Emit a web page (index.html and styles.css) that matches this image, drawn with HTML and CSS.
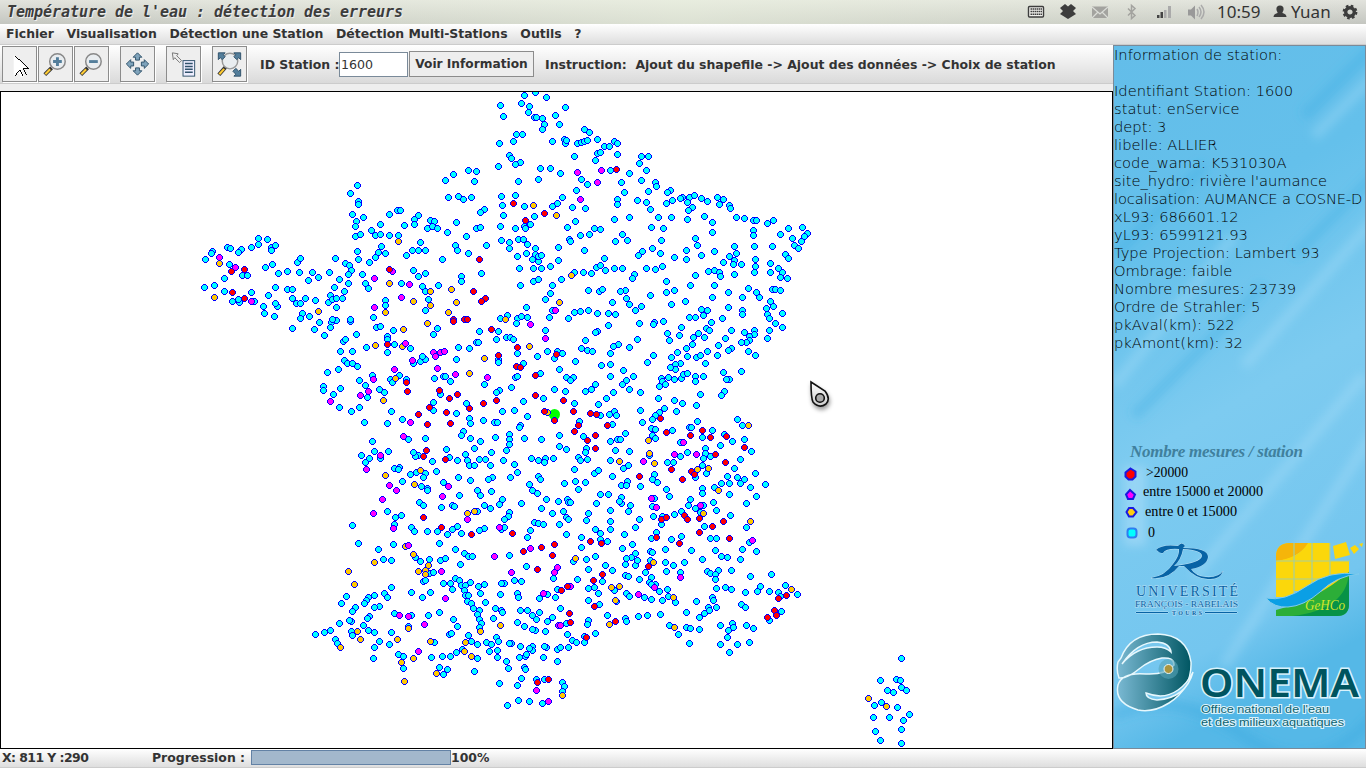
FILE: index.html
```html
<!DOCTYPE html>
<html lang="fr">
<head>
<meta charset="utf-8">
<title>Température de l'eau : détection des erreurs</title>
<link rel="stylesheet" href="styles.css">
</head>
<body>
<header class="topbar">
  <h1 class="title">Température de l'eau : détection des erreurs</h1>
  <div class="tray">
    <svg width="300" height="24" viewBox="1020 0 300 24">
      <rect x="1028.500" y="6.500" width="15" height="10.500" rx="1" fill="#f0f0ec" stroke="#3d3d3d" stroke-width="1.400"/>
      <path d="M1030.500 9h11.500M1030.500 11.500h11.500M1030.500 14.200h11.500" stroke="#3d3d3d" stroke-width="1.600" stroke-dasharray="1.600 .5"/>
      <path d="M1060 8l5-4 3 2.500 3-2.500 5 4-3 3 3 3-8 5-8-5 3-3z" fill="#3d3d3d"/>
      <rect x="1092" y="6.500" width="16" height="11.500" fill="#a3a39f"/>
      <path d="M1092 7l8 7 8-7M1092 18l6-6M1108 18l-6-6" fill="none" stroke="#dbddd8" stroke-width="1.200"/>
      <path d="M1128 8.500l7 7-3.500 3v-13l3.500 3-7 7" fill="none" stroke="#a3a39f" stroke-width="1.500"/>
      <path d="M1157 15h2.500v3h-2.500zM1160.500 12h2.500v6h-2.500z" fill="#444"/><path d="M1164 10h2.500v8h-2.500zM1168 6h3v12h-3z" fill="#aaa"/>
      <path d="M1188 9.500h3l4-4v14l-4-4h-3z" fill="#999"/>
      <path d="M1197 9q2 3 0 7M1199 7q4 5 0 10M1201 5q6 7 0 14" fill="none" stroke="#aaa" stroke-width="1.500"/>
      <circle cx="1280" cy="9" r="3.600" fill="#3d3d3d"/><path d="M1273.500 17q0-3 4-4v-2h5v2q4 1 4 4z" fill="#3d3d3d"/>
    </svg>
    <span class="clock">10:59</span><span class="user">Yuan</span>
    <svg class="gear" width="16" height="16" viewBox="-8 -8 16 16"><circle r="4.300" fill="none" stroke="#3d3d3d" stroke-width="3.400"/><circle r="6.300" fill="none" stroke="#3d3d3d" stroke-width="2.200" stroke-dasharray="2.600 2.350"/></svg>
  </div>
</header>
<nav class="menu"><span>Fichier</span><span>Visualisation</span><span>Détection une Station</span><span>Détection Multi-Stations</span><span>Outils</span><span>?</span></nav>
<main class="main">
  <section class="work">
    <div class="tools">
      <button class="tool"><svg viewBox="0 0 34 34"><path d="M11 8v21l4.500-4 3 6 3-1.500-2.500-7h7z" fill="#fff"/><path d="M12.500 8.500l14 13.500h-6M21 22l3 6M12.500 29l5-6 3 6" fill="none" stroke="#000" shape-rendering="crispEdges"/></svg></button>
      <button class="tool"><svg viewBox="0 0 34 34"><path d="M6 28l7-7" stroke="#333" stroke-width="4"/><path d="M6.500 27.500l5-5" stroke="#fc3" stroke-width="2.200"/><circle cx="19" cy="14.500" r="8" fill="#e9edf0" stroke="#888" stroke-width="1.500"/><path d="M19 10v9M14.500 14.500h9" stroke="#537e9b" stroke-width="3"/></svg></button>
      <button class="tool"><svg viewBox="0 0 34 34"><path d="M6 28l7-7" stroke="#333" stroke-width="4"/><path d="M6.500 27.500l5-5" stroke="#fc3" stroke-width="2.200"/><circle cx="19" cy="14.500" r="8" fill="#e9edf0" stroke="#888" stroke-width="1.500"/><path d="M14.500 14.500h9" stroke="#537e9b" stroke-width="3"/></svg></button>
      <button class="tool gap"><svg viewBox="-17 -17 34 34"><g fill="#7fa3bb" stroke="#31536b"><path d="M0-11.500l4.500 4.500h-2.500v3h-4v-3h-2.500z"/><path d="M0-11.500l4.500 4.500h-2.500v3h-4v-3h-2.500z" transform="rotate(90)"/><path d="M0-11.500l4.500 4.500h-2.500v3h-4v-3h-2.500z" transform="rotate(180)"/><path d="M0-11.500l4.500 4.500h-2.500v3h-4v-3h-2.500z" transform="rotate(270)"/></g></svg></button>
      <button class="tool gap"><svg viewBox="0 0 34 34"><path d="M5.500 5.500l6 1-1.500 2 5 5-2 2-5-5-1.500 2z" fill="#eee" stroke="#777"/><rect x="16.500" y="13.500" width="12" height="16" fill="#eef" stroke="#31536b"/><path d="M18.500 16.500h8M18.500 19.500h8M18.500 22.500h8M18.500 25.500h8" stroke="#31536b" stroke-width="1.500"/></svg></button>
      <button class="tool gap"><svg viewBox="0 0 34 34"><path d="M6 28l7-8" stroke="#333" stroke-width="4"/><path d="M6.500 27.500l5-5.500" stroke="#fc3" stroke-width="2.200"/><circle cx="17.500" cy="14" r="8" fill="#e9edf0" stroke="#999" stroke-width="1.500"/><g fill="#537e9b" stroke="#31536b"><path d="M5.500 5.500h7l-2 2 2 2-3 3-2-2-2 2z"/><path d="M28.500 5.500v7l-2-2-2 2-3-3 2-2-2-2z"/><path d="M28.500 29.500v-7l-2 2-3-3-3 3 3 3-2 2z"/></g></svg></button>
      <span class="label">ID Station :</span><input class="field" value="1600"><button class="info">Voir Information</button>
      <span class="instr">Instruction:&nbsp; Ajout du shapefile -&gt; Ajout des données -&gt; Choix de station</span>
    </div>
    <div class="map">
      <svg id="stations" width="1111" height="656" viewBox="1 92 1111 656"></svg>
    </div>
  </section>
  <aside class="panel">
    <svg class="backdrop" width="251" height="702" viewBox="0 0 251 702" preserveAspectRatio="none">
      <defs><linearGradient id="sky" x1="0" y1="0" x2=".2" y2="1"><stop offset="0" stop-color="#63bde9"/><stop offset=".3" stop-color="#64c0eb"/><stop offset=".58" stop-color="#7dcbf0"/><stop offset=".9" stop-color="#74c6ef"/><stop offset="1" stop-color="#55b8e7"/></linearGradient><filter id="soft" x="-50%" y="-50%" width="200%" height="200%"><feGaussianBlur stdDeviation="5"/></filter>
      <linearGradient id="fish"><stop offset="0" stop-color="#7ab9d3"/><stop offset="1" stop-color="#005662"/></linearGradient></defs>
      <rect width="251" height="702" fill="url(#sky)"/>
      <g filter="url(#soft)" stroke-width="11" fill="none"><path d="M190 70L270-10M180 210L290 100M0 210L90 120M20 370L150 240" stroke="#40ace1" opacity=".35"/><path d="M200 90L270 20M130 320L290 140M0 340L120 190M110 620L270 370M80 530L250 330" stroke="#b9e5fa" opacity=".28"/><path d="M0 670Q60 640 130 690T260 670" stroke="#38a8df" opacity=".4"/></g>
    </svg>
    <pre class="data">Information de station:

Identifiant Station: 1600
statut: enService
dept: 3
libelle: ALLIER
code_wama: K531030A
site_hydro: rivière l'aumance
<span class="tight">localisation: AUMANCE a COSNE-D</span>
xL93: 686601.12
yL93: 6599121.93
Type Projection: Lambert 93
Ombrage: faible
Nombre mesures: 23739
Ordre de Strahler: 5
pkAval(km): 522
pkAmont(km): 32</pre>
    <svg class="legend" width="251" height="310" viewBox="1114 437 251 310">
      <text class="ltitle" x="1130" y="456" textLength="173">Nombre mesures / station</text>
      <g filter="url(#soft)" fill="#a8dcf8" opacity=".6"><rect x="1124" y="465" width="22" height="80"/></g>
      <g stroke="#1a1ae0" stroke-width="2"><path d="M1130.500 467.500l5 3v5l-3 3h-4l-3-3v-4z" fill="#f00"/><path d="M1130 489l5 4.500-2 4.500h-5l-2-4.500z" fill="#f0f"/><path d="M1129 507h4l3.500 4-3.500 4.500h-4l-2.500-4.500z" fill="#fc1"/><rect x="1127.500" y="527.500" width="9" height="9" rx="3" fill="#0ff" stroke="#2f7df0"/></g>
      <g class="ltext"><text x="1146" y="476" textLength="42" lengthAdjust="spacingAndGlyphs">&gt;20000</text><text x="1143" y="494.500" textLength="120" lengthAdjust="spacingAndGlyphs">entre 15000 et 20000</text><text x="1145" y="514.500" textLength="92" lengthAdjust="spacingAndGlyphs">entre 0 et 15000</text><text x="1148" y="535.500">0</text></g>
      <g fill="#0863a5" class="halo"><path d="M1156 549Q1162 543 1178 545q4-5 7 0l-2 2q25 0 25 9-1 9-17 12 4 7 15 8 12 1 17-6-3 9-15 8-12 0-24-13h-5q-11 14-28 12 14-2 22-14 7-9 6-15-13-1-16 4-4 0-5-2zm27-1q-2 11-9 17 27-3 28-10 0-6-19-7z"/>
      <text class="uni" x="1136" y="595" textLength="102">UNIVERSITÉ</text><text class="uni2" x="1135" y="605.500" textLength="103" lengthAdjust="spacingAndGlyphs">FRANÇOIS - RABELAIS</text><text class="uni3" x="1172" y="613.500" textLength="30">TOURS</text><path d="M1136 611h32v1h-32zM1205 611h32v1h-32z"/></g>
      <g><path d="M1276 556q0-14 14-14h4v54h-18z" fill="#fbd70b"/><path d="M1276 560v-4q0-14 14-14h19q-10 15-33 18z" fill="#f5b50a"/><path d="M1276 560q22-2 32-18h22v18h19v30h-73z" fill="#fbd70b"/><path d="M1333 545l13-4 4 13-15 4z" fill="#fbd70b"/><path d="M1350 547l5-3 4 4-5 5zM1359 543l4-1-1 4z" fill="#fbd70b"/><path d="M1294 542v50M1312 542v45M1330 542v42M1276 560h74M1276 578h74" stroke="#a5cf9f" stroke-width="1.200"/><path d="M1276 615v-6q40-10 73-38v32q0 12-12 12z" fill="#2cae38"/><path d="M1349 572v31q0 12-12 12h-45q54-6 57-43z" fill="#079247"/><path d="M1266 597q18 4 41-12 22-16 52-12-23 2-39 18-16 14-32 15-14 1-22-9z" fill="#0b9fe5" stroke="#80cbed"/><text class="gehco" x="1305" y="608.500" textLength="40" lengthAdjust="spacingAndGlyphs">GeHCo</text></g>
      <g stroke="#e7f8fd" stroke-width="1.500" fill="url(#fish)"><path d="M1121 656Q1130 632 1158 632q29 1 33 28 1 26-22 41-16 10-31 7-24-7-20-25 4-13 28-11 20 1 28-9 0-8-12-7-12 2-23 11-12 10-20 9-3-8-1-16z" transform="translate(0 1)"/><path d="M1122 663q14-17 35-17 9 0 14 5-1-9-14-10-20 0-35 22z" fill="#79c8ee"/><path d="M1193 671q-7 26-36 28-11-1-11-7 18 7 32-3 9-6 15-18z" fill="#79c8ee"/></g><circle cx="1168.500" cy="668" r="10" fill="#55a3b8" opacity=".6"/><circle cx="1168.500" cy="668" r="4.500" fill="#ab953e" stroke="#e7f8fd"/>
      <text class="onema" x="1200" y="696" textLength="159" lengthAdjust="spacingAndGlyphs">ONEMA</text><g class="office"><text x="1201" y="712" textLength="128" lengthAdjust="spacingAndGlyphs">Office national de l'eau</text><text x="1201" y="724.500" textLength="143" lengthAdjust="spacingAndGlyphs">et des milieux aquatiques</text></g>
    </svg>
  </aside>
</main>
<footer class="status"><span class="coords">X: 811 Y :290</span><span class="prog">Progression :</span><span class="bar"></span><span>100%</span></footer>
<svg class="pointer" width="34" height="40" viewBox="804 376 34 40"><defs><linearGradient id="pg" x1="0" y1="0" x2="0" y2="1"><stop offset="0" stop-color="#fff"/><stop offset="1" stop-color="#ccc"/></linearGradient></defs><path d="M811 382L825 391Q831 399 826 404 819 409 813 402 811 398 811 382z" fill="url(#pg)" stroke="#111" stroke-width="1.600"/><circle cx="820" cy="398" r="4.300" fill="#aaa" stroke="#111" stroke-width="1.600"/></svg>
<script src="stations.js"></script>
</body>
</html>
```
FILE: styles.css
```css
* { box-sizing: border-box; }
body { margin: 0; width: 1366px; height: 768px; overflow: hidden; display: flex; flex-direction: column; background: #eee; color: #333; font: bold 12.450px "DejaVu Sans", sans-serif; }
.topbar { height: 24px; flex: none; display: flex; justify-content: space-between; align-items: center; padding-left: 7px; background: linear-gradient(90deg, transparent, rgba(236, 243, 224, .6) 50%, transparent), linear-gradient(#e2e3dd, #c4c6c0); }
.title { margin: 0; font: italic bold 15px/24px "DejaVu Sans Mono", monospace; letter-spacing: -.03px; color: #3c3c3c; text-shadow: 1px 1px #eee; }
.tray { display: flex; width: 346px; position: relative; height: 24px; font: 17px/24px "Noto Sans", sans-serif; }
.clock, .user, .gear { position: absolute; top: 0; }
.clock { left: 197px; }
.user { left: 271px; }
.gear { left: 322px; top: 4px; }
.menu { height: 21px; flex: none; display: flex; gap: 12.700px; padding: 2px 6px 0; line-height: 15px; background: linear-gradient(#fff, #dedede); border-bottom: 1px solid #ccc; }
.main { height: 704px; flex: none; display: grid; grid-template-columns: 1113px 253px; }
.work { display: flex; flex-direction: column; }
.tools { height: 39px; flex: none; display: flex; align-items: center; margin-bottom: 7px; padding-left: 2px; background: linear-gradient(#fff, #dadada); border-bottom: 1px solid #ccc; }
.tool { width: 35px; height: 36px; margin: 0 1px 0 0; padding: 0; border: 1px solid #8c8c8c; background: #eee; box-shadow: 1px 1px #fff; flex: none; }
.tool svg { display: block; width: 33px; height: 34px; }
.gap { margin-left: 10px; }
.label { width: 79px; margin-left: 12px; white-space: nowrap; }
.field { width: 69px; height: 25px; border: 1px solid #7a8a99; background: #fff; padding: 0 1px; font: 12.600px "DejaVu Sans", sans-serif; color: #333; }
.info { width: 125px; height: 26px; margin-left: 1px; padding: 0; border: 1px solid #8c8c8c; background: #eee; color: #333; font: inherit; font-size: 12.200px; white-space: nowrap; }
.instr { margin-left: 11px; white-space: nowrap; }
.map { height: 658px; border: 1px solid #000; background: #fff; }
.map svg { display: block; }
.panel { display: grid; grid-template: 702px / 251px; border: 1px solid #7a8a99; overflow: hidden; height: 704px; }
.backdrop, .data, .legend { grid-area: 1 / 1; }
.data { margin: 0; font: 200 14.700px/18px "DejaVu Sans", sans-serif; color: #000; }
.tight { letter-spacing: -.16px; }
.legend { align-self: end; }
.ltitle { font: italic bold 17px "Liberation Serif", serif; fill: #40809d; }
.ltext { font: 14px "Liberation Serif", serif; fill: #000; }
.halo { stroke: #b9dff3; stroke-width: 1px; paint-order: stroke; }
.uni { font: 14px "Liberation Serif", serif; }
.uni2 { font: 9px "Liberation Serif", serif; }
.uni3 { font: bold 6px "Liberation Serif", serif; }
.gehco { font: italic 14px "Liberation Serif", serif; fill: #d3e62c; }
.onema { font: 600 39px "Noto Sans", sans-serif; fill: #00545f; stroke: #d9f2fc; stroke-width: 3px; paint-order: stroke; }
.office { font: 10.600px "Liberation Sans", sans-serif; fill: #0c6270; stroke: #d9f2fc; stroke-width: 2px; paint-order: stroke; }
.status { height: 19px; flex: none; display: flex; align-items: center; padding: 0 0 2px 2px; background: linear-gradient(#fff, #dedede); border-bottom: 1px solid #ccc; white-space: nowrap; }
.coords { width: 150px; letter-spacing: -.55px; }
.prog { width: 99px; }
.bar { width: 200px; height: 15px; background: #a3b8cc; border: 1px solid #6382a5; }
.pointer { position: absolute; left: 804px; top: 376px; filter: drop-shadow(1px 3px 2px #999); }
```
FILE: stations.js
```js
// Each sheet has an origin in map pixels; stations are stored in thirds of a pixel.
const sheets = [
  { x: 240, y: 300, c: '188,41 181,55 207,49 239,68 157,86 224,87 253,107 275,66 289,62 272,81 71,19 73,40 102,48 113,20 107,10 330,64 348,102 309,124 317,117 302,154 337,153', r: '', m: '', o: '235,34' },
  { x: 200, y: 90,
    c: '901,46 911,78 898,160 894,230 804,242 830,243 759,252 737,270 824,275 744,321 774,319 791,327 814,322 853,357 840,366 473,287 451,310 476,334 475,342 458,374 490,382 469,394 466,410 467,440 482,433 515,421 541,403 527,436 540,433 569,437 595,435 569,372 591,362 602,360 612,407 643,388 656,377 643,403 681,415 690,390 704,394 696,408 711,414 742,427 768,398 828,415 840,411 799,439 859,467 766,466 771,482 805,491 728,509 661,458 638,482 654,482 676,481 619,497 545,468 534,486 557,490 527,503 508,517 471,484 476,507 407,505 435,520 447,527 454,541 445,553 388,547 419,567 445,579 402,591 432,605 391,615 385,638 398,629 410,626 428,625 408,653 488,554 495,579 505,596 640,540 656,560 676,550 605,579 666,589 675,605 714,586 684,629 677,661 555,631 555,645 519,681 176,445 202,447 176,463 153,473 81,472 90,476 125,478 115,487 36,484 33,489 15,509 88,524 73,565 126,555 141,555 44,586 13,592 72,604 96,633 117,636 114,629 153,608 157,610 162,633 206,615 191,649 194,670 222,678 234,650 226,640 226,592 195,531 218,522 234,549 263,545 298,546 293,518 300,504 324,571 337,547 356,562 261,597 276,598 276,625 288,640 302,640 315,626 345,630 307,670 302,684 326,680 213,471 215,481 226,466 785,560 785,573 845,551 902,686 396,689 408,689 450,689',
    r: '94,544 132,538 96,607 134,626 567,537 838,508 820,604 855,625 843,633 760,689 793,688 803,689', m: '59,502 106,532 154,633 576,543 523,565 629,582 604,622 522,651', o: '58,520 44,622 355,664 594,455 569,580 690,604 641,635 690,645 755,597 768,637 746,666 555,666' },
  { x: 500, y: 90,
    c: '73,16 106,8 138,22 64,40 2,46 11,78 87,50 84,68 196,52 167,75 104,82 109,83 126,86 132,102 126,117 179,103 49,133 66,133 40,154 2,160 27,195 33,206 62,217 47,223 122,235 150,234 180,250 54,273 116,269 157,155 192,149 195,159 200,152 224,198 254,118 268,128 291,147 233,159 243,158 254,153 262,151 313,168 329,168 342,154 353,160 293,190 302,188 287,212 352,193 425,199 444,198 418,221 440,242 332,241 389,250 245,268 262,283 229,302 365,276 425,271 467,276 468,290 444,304 372,308 510,302 502,308 186,321 158,350 171,341 216,353 257,354 352,328 352,344 411,330 438,338 452,359 498,340 518,330 547,323 541,325 569,323 583,317 563,338 604,324 622,334 577,351 566,361 651,321 671,328 657,344 687,346 690,355 5,320 46,317 8,347 74,349 11,375 102,379 90,402 72,408 77,416 46,415 2,409 227,395 202,412 242,436 269,434 284,415 302,417 343,388 389,383 476,382 515,382 453,411 489,415 562,387 612,378 638,397 638,426 708,383 733,385 761,391 769,390 820,391 802,400 760,422 760,436 840,433 865,416 906,412 922,429 912,440 904,455 876,446 883,466 895,476 366,434 346,454 381,450 587,445 592,466 484,451 458,475 428,484 415,497 480,489 522,502 560,482 560,508 605,496 642,485 703,469 708,491 687,498 703,511 699,524 723,523 670,517 764,468 817,468 767,508 767,530 762,547 702,552 856,494 865,505 811,521 835,536 847,547 811,548 842,562 863,565 207,447 211,454 176,472 252,482 176,511 152,530 5,450 28,457 54,448 69,448 81,464 28,474 80,490 53,499 106,475 105,494 97,507 114,514 115,498 124,496 57,535 100,536 125,536 183,568 223,547 251,548 273,550 288,531 300,527 316,541 313,504 342,534 366,536 402,552 398,565 440,535 465,537 486,529 585,556 625,544 643,541 659,548 661,560 642,585 570,585 686,607 636,622 684,652 744,595 768,607 777,622 728,622 728,660 726,673 668,684 622,660 604,657 611,677 586,682 569,681 500,573 500,607 522,600 513,642 555,633 450,615 376,600 360,605 378,626 387,642 423,648 406,661 336,637 266,600 297,605 308,597 60,587 101,573 114,568 158,587 150,611 137,627 79,651 156,661 147,681 22,677 5,686 52,686 63,679 83,682 206,686 223,668 240,663 266,661 292,669 325,669 347,674 817,597 825,597 842,600 810,633 820,648 798,654 803,672 807,684 848,671',
    r: '350,237 40,341 133,370 77,392', m: '233,246 304,240 292,277 240,329 167,662', o: '100,346 168,377 214,556 177,638 17,689' },
  { x: 300, y: 310,
    c: '6,12 4,24 27,19 60,38 44,57 73,77 97,34 109,31 93,51 150,34 169,72 221,21 228,53 242,49 281,61 263,78 263,87 282,102 261,127 330,114 377,2 412,56 401,73 621,17 602,28 662,18 682,22 655,29 650,41 596,63 588,89 618,83 632,82 639,88 537,65 475,112 509,114 528,98 535,97 652,130 748,21 737,60 742,124 711,140 803,26 772,124 788,129 763,146 779,179 799,203 764,238 796,245 729,265 720,189 670,160 469,149 403,205 430,200 435,199 452,213 554,223 597,240 588,246 646,203 652,199 635,233 594,149 594,158 122,124 156,123 129,94 137,88 200,113 133,152 142,161 156,159 172,169 114,178 82,187 70,229 70,241 120,234 100,252 119,292 153,303 178,291 178,210 197,226 218,196 239,238 254,246 203,262 273,303 193,338 262,340 308,328 326,388 377,384 339,161 361,153 375,148 368,139 270,209 276,216 297,195 320,207 420,253 399,277 400,301 469,311 498,279 509,326 511,341 550,331 583,338 593,338 661,346 658,352 683,319 644,301 606,303 669,273 585,381 541,393 511,385 523,415 491,363 484,377 628,373 628,388 628,404 620,422 674,385 725,389 778,375 777,409 800,417 575,428 438,417 447,442 472,450 497,432 503,451 508,466 522,467 538,448 555,448 572,465 610,452 643,463 651,486 632,503 578,502 565,508 510,512 476,501 408,485 398,453 354,435 347,440 339,426 332,493 350,487 377,490 370,502 383,535 364,530 308,514 284,475 298,471 294,478 266,423 223,424 208,445 196,458 185,436 242,444 216,394 431,516 479,557 574,545 533,541 541,556 607,568 693,446 715,452 735,446 732,458 761,446 714,498 721,509 687,524 698,541 712,551 792,521 739,568 803,569',
    r: '459,33 492,29 503,30 575,59 653,112 594,135 263,103 320,217 322,245 419,240 471,252 449,265 389,292 438,306 507,295 551,281 588,271 648,170 662,171 706,197 768,133 705,256 789,271 732,305 762,330 356,313 383,344 450,341 378,422 370,440 435,448', m: '763,2 691,42 737,85 317,99 338,150 400,127 407,139 420,126 432,125 283,178 219,209 206,245 181,256 90,275 411,174 465,192 563,203 330,337 309,380 242,437 200,478 267,527 289,541 428,558 446,529 246,568', o: '56,4 255,5 447,5 382,40 310,58 226,107 306,108 552,145 508,190 688,109 286,204 249,272 256,496 361,482 344,524 616,29 742,306' },
  { x: 560, y: 310,
    c: '25,25 43,10 62,5 86,5 112,10 145,8 167,14 226,2 146,47 237,39 283,38 280,44 310,34 113,64 106,67 75,91 174,103 159,108 150,129 209,111 233,89 64,116 81,121 98,124 9,129 46,155 125,167 152,163 2,178 190,182 221,200 199,212 186,224 152,199 40,202 32,210 19,203 16,245 76,243 94,238 106,224 207,238 241,246 161,248 140,265 115,284 43,279 262,158 281,135 323,70 329,91 359,76 365,51 391,21 406,22 431,17 442,5 489,23 455,37 440,56 449,61 416,69 401,83 434,83 397,102 379,116 353,126 334,141 382,138 410,142 420,137 443,125 471,135 475,105 497,86 514,62 513,115 504,122 436,160 360,160 345,163 345,178 330,172 325,203 303,204 306,213 316,224 297,228 342,209 363,205 370,192 381,191 407,199 429,199 407,214 489,187 507,207 499,207 544,184 493,245 484,257 422,254 409,286 367,280 344,271 348,304 295,264 313,296 298,307 285,316 276,329 248,338 241,300 545,13 548,2 553,67 583,60 583,72 568,79 568,92 560,96 545,96 566,125 587,135 622,12 627,29 646,40 667,51 667,13 627,62 621,84 120,317 149,313 162,305 169,317 57,334 157,343 197,371 150,393 171,388 181,387 71,379 78,415 77,428 20,417 2,374 2,409 166,421 209,423 150,450 189,474 206,466 54,441 60,451 82,447 43,477 104,490 115,482 47,514 76,517 55,539 11,520 122,553 144,553 184,562 157,500 184,527 201,514 200,527 241,530 277,375 285,384 275,356 286,357 336,361 413,334 387,352 395,352 360,398 268,436 322,457 341,456 362,440 381,426 437,415 437,429 431,445 450,440 428,466 440,489 407,502 428,381 458,362 494,374 518,394 480,407 531,327 548,347 554,387 574,424 540,447 522,475 587,490 616,523 532,503 554,509 542,521 571,533 502,499 485,521 507,521 464,533 426,534 427,551 508,554 588,560 283,493 276,507 293,518 318,537 327,559 392,568 283,565 451,61',
    r: '9,271 41,305 92,311 110,313 142,346 56,347 43,365 106,376 83,392 106,415 300,326 318,367 391,377 426,360 452,382 498,380 467,433 553,412 495,456 334,478 367,508 395,485 402,493 239,498', m: '369,397 343,433 409,433 250,453 275,565', o: '266,391 566,346 268,430 178,454 284,461 412,477 446,475 476,542' },
  { x: 300, y: 490,
    c: '382,2 357,36 371,46 424,53 457,46 463,50 479,16 541,15 533,4 574,4 607,29 597,44 663,40 552,46 572,56 531,65 629,66 626,78 613,89 697,4 712,10 739,29 775,35 725,55 757,70 791,65 798,83 806,38 702,96 715,100 729,103 778,103 800,133 690,120 683,142 604,118 612,113 554,115 538,122 483,130 473,110 457,118 443,133 411,124 381,123 333,111 342,125 287,82 304,77 283,103 263,64 157,106 176,160 236,178 279,163 251,208 274,211 418,160 466,179 492,190 506,198 518,198 480,222 629,197 678,230 644,271 665,274 614,280 605,281 602,314 651,309 655,322 718,325 742,312 765,321 773,297 760,265 388,209 347,203 361,214 422,210 435,206 388,250 400,247 370,275 377,272 392,308 368,323 334,307 418,366 384,377 429,280 452,280 467,265 479,270 483,287 495,287 511,278 534,290 553,283 456,297 492,302 497,317 506,317 501,333 515,339 521,354 537,360 531,372 538,389 544,399 537,413 540,310 557,337 585,355 605,361 606,367 579,386 460,388 473,409 447,432 454,430 506,436 515,454 531,462 488,479 469,488 450,500 428,499 393,503 403,458 533,505 568,484 559,457 574,462 588,442 595,454 591,480 591,503 523,544 275,292 254,310 263,321 222,317 206,322 199,330 192,341 165,352 158,365 238,348 223,352 140,318 124,341 208,380 203,384 191,406 206,422 222,426 153,394 147,392 118,400 154,424 157,437 91,422 74,428 46,432 106,449 112,459 239,454 223,473 269,462 221,505 294,494 309,498 309,536 274,427 284,371 333,377 324,409 417,533 431,553 443,538 599,580 620,515 626,534 659,501 677,500 680,492 634,459 627,460 660,470 696,470 697,480 687,475 672,531 677,538 731,502 739,472 732,468 773,514 772,477 782,473 806,472 803,432 800,401 780,355 758,383 742,394 736,425 705,421 696,417 674,408 651,397 660,360 683,360 697,376 717,368 708,388 663,565 668,569 653,587 708,568 733,568 787,576 792,588 788,603 654,631 687,633 727,639 621,647',
    r: '370,82 423,112 515,133 638,129 671,184 723,172 764,162 757,196 711,238 803,289 784,302 808,370 713,578 745,568', m: '289,2 428,18 246,31 219,70 281,114 502,88 597,111 324,165 584,199 690,174 635,247 772,232 764,247 425,243 436,325 298,376 324,378 372,404 730,310 776,405 356,484 708,601 745,633', o: '503,69 524,63 223,217 144,244 163,283 317,170 340,192 385,227 376,240 356,244 376,254 324,415 292,449 171,425 181,449 121,471 341,506 304,517 312,575 391,454 541,425 601,406 497,457 493,485 513,500 409,551 787,615' },
  { x: 560, y: 490,
    c: '54,2 122,13 144,13 109,40 30,38 11,65 17,83 26,89 151,60 184,22 184,40 178,33 211,47 205,65 237,88 226,112 192,132 150,95 151,118 84,70 79,91 22,133 64,143 65,172 106,117 122,129 122,149 142,154 80,207 107,199 40,215 188,174 218,163 226,190 213,203 199,205 196,222 226,226 232,210 136,226 158,240 85,238 126,273 52,267 103,291 86,294 115,311 85,331 119,344 164,301 168,333 143,375 84,390 83,403 105,431 22,401 24,432 36,451 49,458 72,458 73,440 27,472 4,472 196,385 199,393 236,380 262,376 302,374 199,310 209,320 252,323 273,329 307,331 321,297 325,320 346,337 237,269 196,256 205,260 256,247 274,262 268,277 286,284 274,283 297,303 270,210 271,183 278,188 315,177 315,216 340,226 320,243 360,246 372,216 394,182 335,148 365,140 427,208 466,180 484,198 502,202 275,145 290,127 304,103 280,79 308,79 283,25 277,50 342,72 365,65 384,45 392,28 405,54 420,68 431,46 461,37 468,62 433,109 451,144 470,144 512,75 560,41 587,21 508,14 427,11 327,18 559,112 567,156 547,178 588,185 540,207 514,242 475,242 442,244 452,251 465,252 465,267 469,294 496,292 515,297 555,306 570,260 633,254 602,289 592,305 629,303 656,306 675,285 662,320 713,314 665,364 627,392 545,343 555,353 457,321 461,330 409,334 469,351 445,353 449,360 433,369 418,381 378,367 329,405 355,432 378,411 390,416 419,417 387,461 481,407 518,399 519,412 505,421 501,443 481,463 508,487 532,462 568,458 558,407 580,415 8,576 13,588 9,603 1023,506 961,571 1008,569 1021,571 1023,591 1040,602 1000,607 981,602 963,636 944,647 1011,653 940,682 988,683 1048,673 1030,691 1023,717 945,725 962,750 1025,761',
    r: '90,155 124,160 127,252 100,271 22,289 5,302 103,349 30,370 30,397 167,394 80,442 264,229 290,142 305,89 320,82 374,76 381,89 419,84 419,128 358,161 456,109 490,93 508,144 679,317 654,326 644,362 650,376 623,382', m: '275,23 290,53 421,46 576,151 362,261 283,292 234,312 32,288 2,405', o: '47,205 155,293 179,289 166,331 149,403 341,323 343,412 281,218 430,70 571,95 695,298 926,625 979,648 476,2 8,615' }
];
const fills = { o: '#ffc800', m: '#ff00ff', c: '#00ffff', r: '#ff0000' };
// Pixel-stepped discs: a 7px rim and the 5px core inside it.
const rim = 'h3v1h1v1h1v3h-1v1h-1v1h-3v-1h-1v-1h-1v-3h1v-1h1z';
const core = 'h3v1h1v3h-1v1h-3v-1h-1v-3h1z';
const seen = new Set();
let marks = '';
for (const kind of ['c', 'o', 'm', 'r']) {
  for (const s of sheets) {
    for (const pair of s[kind].split(' ').filter(Boolean)) {
      const [px, py] = pair.split(',').map(Number);
      const x = Math.floor(s.x + px / 3);
      const y = Math.floor(s.y + py / 3);
      // Neighbouring sheets share their borders, so a station may be listed twice.
      let known = false;
      for (const dx of [-1, 0, 1]) for (const dy of [-1, 0, 1]) {
        const hit = seen.has(`${kind}${x + dx},${y + dy}`);
        known = known || hit;
      }
      if (known) continue;
      seen.add(`${kind}${x},${y}`);
      marks += `<path d="M${x - 1} ${y - 3}${rim}" fill="#0000ff"/><path d="M${x - 1} ${y - 2}${core}" fill="${fills[kind]}"/>`;
    }
  }
}
document.getElementById('stations').innerHTML =
  `<circle cx="554.5" cy="414.500" r="5.500" fill="#0f0"/><g shape-rendering="crispEdges">${marks}</g>`;
```
